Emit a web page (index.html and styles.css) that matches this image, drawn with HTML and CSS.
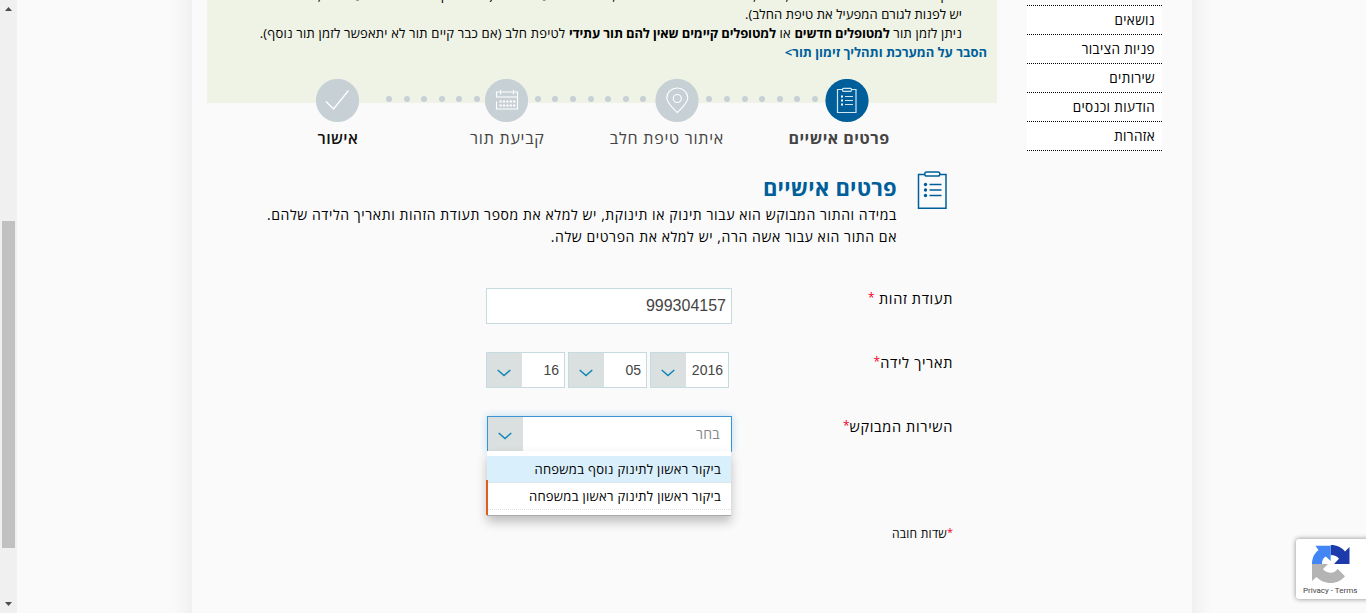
FILE: index.html
```html
<!DOCTYPE html>
<html lang="he">
<head>
<meta charset="utf-8">
<title>זימון תור לטיפת חלב</title>
<link rel="stylesheet" href="styles.css">
</head>
<body>
<div class="scrollbar">
  <svg class="arrow" width="7" height="4" viewBox="0 0 7 4"><path d="M3.5 0 7 4H0z" fill="#4d4d4d"/></svg>
  <div class="thumb"></div>
  <svg class="arrow" width="7" height="4" viewBox="0 0 7 4"><path d="M3.5 4 7 0H0z" fill="#4d4d4d"/></svg>
</div>
<div class="shade shade-left"></div>
<div class="container">
  <main class="main">
    <section class="notice" dir="rtl">
      <p class="line"><span class="t n1">זימון התור באתר הוא לטיפות חלב, ולאם, אשר תחת משרד הבריאות, בכל שאר הערים שלנו (למשל בקופת חולים או בעירייה זו,</span></p>
      <p class="line"><span class="t n1">יש לפנות לגורם המפעיל את טיפת החלב).</span></p>
      <p class="line"><span class="t n2">ניתן לזמן תור <b>למטופלים חדשים</b> או <b>למטופלים קיימים שאין להם תור עתידי</b> לטיפת חלב (אם כבר קיים תור לא יתאפשר לזמן תור נוסף).</span></p>
      <p class="line more"><a class="t n3">הסבר על המערכת ותהליך זימון תור&gt;</a></p>
    </section>
    <nav class="steps" dir="rtl">
      <div class="step active">
        <svg width="44" height="44" viewBox="0 0 44 44"><circle cx="22" cy="21.5" r="21.6" fill="#005f9b"/><g fill="none" stroke="#cfe6f1" stroke-width="1.2"><path d="M17 10.500h-4.500v23h18.500v-23h-4.500"/><rect x="17.500" y="9.300" width="9" height="3" rx="1"/><path d="M20 17.500h8M20 21.500h8M20 25.500h8"/></g><path d="M16 16.500h2v2h-2zM16 20.500h2v2h-2zM16 24.500h2v2h-2z" fill="#fff"/></svg>
        <span class="t s1">פרטים אישיים</span>
      </div>
      <div class="dots"><i></i><i></i><i></i><i></i><i></i><i></i><i></i></div>
      <div class="step">
        <svg width="44" height="44" viewBox="0 0 44 44"><circle cx="22" cy="21.5" r="21.6" fill="#c6d0d5"/><g fill="none" stroke="#fff" stroke-width="1.100"><path d="M22.300 33.500c-5-5-10.500-9.500-10.500-14.500a10.500 10 0 0 1 21 0c0 5-5.500 9.500-10.500 14.500z"/><circle cx="22.300" cy="19.500" r="4"/></g></svg>
        <span class="t s2">איתור טיפת חלב</span>
      </div>
      <div class="dots second"><i></i><i></i><i></i><i></i><i></i><i></i><i></i></div>
      <div class="step">
        <svg width="44" height="44" viewBox="0 0 44 44"><circle cx="22.5" cy="21.5" r="21.6" fill="#c6d0d5"/><g fill="none" stroke="#fff" stroke-width="1.100"><path d="M12.500 18.500v-5.500h21v17h-21v-7.500M12.500 18h21M16.500 11v4.500M29.500 11v4.500"/></g><path d="M15.500 22.500h16M15.500 26.500h16" stroke="#fff" stroke-width="2.200" stroke-dasharray="2.200 1.200"/></svg>
        <span class="t s3">קביעת תור</span>
      </div>
      <div class="dots third"><i></i><i></i><i></i><i></i><i></i><i></i></div>
      <div class="step last">
        <svg width="44" height="44" viewBox="0 0 44 44"><circle cx="21.5" cy="21.5" r="21.6" fill="#c6d0d5"/><path d="M10 22.500l7.500 7.500L32.500 11.500" fill="none" stroke="#fff" stroke-width="1.300"/></svg>
        <span class="t s4">אישור</span>
      </div>
    </nav>
    <header class="heading" dir="rtl">
      <svg width="32" height="40" viewBox="0 0 32 40"><g fill="none" stroke="#005f9b" stroke-width="1.500"><path d="M8 4.500H1.500v33.700h27.500V4.500h-6"/><rect x="7.800" y="2" width="15" height="4" rx="1.800"/><path d="M12.500 14.500h12M12.500 20h12M12.500 25.500h12" stroke-width="1.300"/></g><g fill="#005f9b"><circle cx="8.500" cy="14.500" r="1.700"/><circle cx="8.500" cy="20" r="1.700"/><circle cx="8.500" cy="25.500" r="1.700"/></g></svg>
      <div class="heading-text">
        <h1><span class="t h">פרטים אישיים</span></h1>
        <p><span class="t p1">במידה והתור המבוקש הוא עבור תינוק או תינוקת, יש למלא את מספר תעודת הזהות ותאריך הלידה שלהם.</span></p>
        <p><span class="t p2">אם התור הוא עבור אשה הרה, יש למלא את הפרטים שלה.</span></p>
      </div>
    </header>
    <form class="form" dir="rtl">
      <div class="row">
        <label><span class="t l1">תעודת זהות <em>*</em></span></label>
        <div class="input">999304157</div>
      </div>
      <div class="row">
        <label><span class="t l2">תאריך לידה<em>*</em></span></label>
        <div class="dates">
          <div class="select"><span class="val">2016</span><span class="btn"><svg width="14" height="8" viewBox="0 0 14 8"><path d="M.7 1 7 6.500 13.300 1"/></svg></span></div>
          <div class="select"><span class="val">05</span><span class="btn"><svg width="14" height="8" viewBox="0 0 14 8"><path d="M.7 1 7 6.500 13.300 1"/></svg></span></div>
          <div class="select"><span class="val">16</span><span class="btn"><svg width="14" height="8" viewBox="0 0 14 8"><path d="M.7 1 7 6.500 13.300 1"/></svg></span></div>
        </div>
      </div>
      <div class="row">
        <label><span class="t l3">השירות המבוקש<em>*</em></span></label>
        <div class="combo">
          <div class="select open"><span class="val"><span class="t c0">בחר</span></span><span class="btn"><svg width="14" height="8" viewBox="0 0 14 8"><path d="M.7 1 7 6.500 13.300 1"/></svg></span></div>
          <div class="menu">
            <div class="option hover"><span class="t o1">ביקור ראשון לתינוק נוסף במשפחה</span></div>
            <div class="option"><span class="t o2">ביקור ראשון לתינוק ראשון במשפחה</span></div>
          </div>
        </div>
      </div>
      <p class="required"><span class="t r"><em>*</em>שדות חובה</span></p>
    </form>
  </main>
  <aside class="sidebar" dir="rtl">
    <a><span class="t">נושאים</span></a>
    <a><span class="t">פניות הציבור</span></a>
    <a><span class="t">שירותים</span></a>
    <a><span class="t">הודעות וכנסים</span></a>
    <a><span class="t">אזהרות</span></a>
  </aside>
</div>
<div class="shade shade-right"></div>
<div class="captcha">
  <svg width="38" height="38" viewBox="0 0 38 38"><path d="M18.700 0C25 0 30 2.500 33 6.500L37.500 2v17H22l5-5.200C25 11.200 22.500 10 18.700 10z" fill="#1c3aa9"/><path d="M0 19C0 13 2.500 8 6.500 5.300L3.500 .8h15.200V16l-4.900-4.500C11 13 10 15.500 10 19z" fill="#4285f4"/><path d="M0 19v17l4.500-4c3.500 3.800 8.500 6 14.200 6 5.800 0 10.800-2.700 14.300-6.800l-7.500-7.400c-1.500 2.500-3.700 4-6.800 4-3.200 0-5.700-1.300-7.700-3.800l5-5z" fill="#b4b4b4"/></svg>
  <span>Privacy - Terms</span>
</div>
</body>
</html>
```
FILE: styles.css
```css
* { box-sizing: border-box; }
body { margin: 0; width: 1366px; height: 613px; overflow: hidden; background: #fafafa; display: flex; font-family: "Open Sans", "Noto Sans", sans-serif; color: #000; }
p, h1 { margin: 0; }
em { font-style: normal; color: #f00028; font-size: 12px; line-height: 1; letter-spacing: 0; vertical-align: 2px; }
.t { white-space: nowrap; }
.scrollbar { width: 17px; height: 613px; background: #f0f0f0; display: flex; flex-direction: column; align-items: flex-start; padding: 7px 0 7px 2px; }
.arrow { margin-left: 3px; flex: none; }
.thumb { width: 13px; height: 327px; background: #c1c1c1; margin: 210px 0 auto; }
.shade { width: 20px; }
.shade-left { margin-left: 155px; background: linear-gradient(to right, #fafafa, #f7f7f7 40%, #f0f0f0); }
.shade-right { background: linear-gradient(to left, #fafafa, #f7f7f7 40%, #f0f0f0); }
.container { width: 1000px; height: 613px; display: flex; padding: 0 30px 0 15px; gap: 30px; }
.main { width: 790px; }
.notice { height: 103px; background: #eff3e6; overflow: hidden; font-size: 13px; display: flex; flex-direction: column; padding-right: 35px; }
.notice .line { height: 19px; line-height: 19px; flex: none; }
.notice .line:first-child { margin-top: -14px; }
.notice .more { margin-right: -25px; color: #005f9b; font-weight: 700; }
.n1 { letter-spacing: .08px; }
.n2 { letter-spacing: .2px; }
.n2 b { letter-spacing: -.15px; }
.n3 { letter-spacing: -.03px; }
.steps { display: flex; gap: 7px; height: 72px; margin: -24px 128px 0 0; }
.step { width: 44px; flex: none; display: flex; flex-direction: column; align-items: center; color: #444; font-size: 16px; line-height: 22px; gap: 4px; }
.step svg { flex: none; }
.step.active { font-weight: 700; }
.s1 { margin-left: -16px; letter-spacing: .48px; }
.s2 { margin-left: -21px; letter-spacing: .77px; }
.s3 { margin-right: -3px; letter-spacing: .77px; }
.s4 { letter-spacing: .4px; }
.step.last { color: #111; font-weight: 600; }
.dots { display: flex; gap: 11.600px; padding-top: 17px; }
.dots i { width: 6px; height: 6px; border-radius: 50%; background: #c6d0d5; }
.dots.second { margin-right: 2px; }
.dots.third { margin: 0 -3px 0 19px; }
.heading { display: flex; gap: 20px; height: 118px; padding: 19px 48px 0 0; }
.heading-text { padding-top: 1px; }
h1 { font-size: 22px; line-height: 32px; height: 33px; color: #005f9b; }
.h { letter-spacing: .25px; }
.heading p { font-size: 14px; line-height: 22px; letter-spacing: .58px; }
.form { padding: 19px 44px 0 0; }
.row { display: flex; height: 64px; }
label { width: 221px; font-size: 14.500px; line-height: 22px; letter-spacing: .65px; }
.input { width: 246px; height: 36px; border: 1px solid #c5dbe0; background: #fff; font: 16px/34px "Liberation Sans", Arial, sans-serif; color: #444; padding-right: 5px; }
.dates { display: flex; gap: 3px; padding-right: 3px; }
.select { width: 79px; height: 36px; border: 1px solid #c5dbe0; background: #fff; display: flex; font: 14px/34px "Liberation Sans", Arial, sans-serif; color: #444; }
.val { flex: 1; padding-right: 5px; }
.btn { width: 35px; background: #dadfe0; display: flex; align-items: center; justify-content: center; padding: 6px 0 0 0; }
.btn svg { margin-right: 2px; }
.btn path { fill: none; stroke: #0a84b4; stroke-width: 1.400; }
.combo { width: 246px; }
.select.open { width: 245px; border-color: #3c93d2; border-bottom-color: #bbb; box-shadow: 0 0 8px #b9d9ee; font-family: "Open Sans", sans-serif; font-size: 14px; color: #888; }
.open .val { padding-right: 11px; letter-spacing: .3px; }
.open .btn { padding-top: 4px; }
.menu { width: 244px; height: 65px; margin: -1px 1px 0 0; padding-top: 5px; background: #fff; border-bottom: 1px solid #aaa; box-shadow: 0 6px 10px rgba(0,0,0,.24); position: relative; }
.menu::after { content: ""; position: absolute; left: -1px; top: 29px; width: 2px; height: 35px; background: #e05d21; }
.option { height: 27px; line-height: 26px; font-size: 13px; padding-right: 10px; border-bottom: 1px dotted #ddd; letter-spacing: .29px; }
.hover { background: #d9effc; }
.required { font-size: 12px; line-height: 20px; margin-top: 44px; letter-spacing: .25px; }
.required em { font-size: 11px; }
.sidebar { width: 135px; margin-top: 5px; height: 146px; background: #fff; border-top: 1px dotted #000; font-size: 13.500px; letter-spacing: .35px; }
.sidebar a { display: block; height: 29px; line-height: 29px; padding-right: 7px; border-bottom: 1px dotted #000; }
.captcha { position: absolute; left: 1296px; top: 539px; width: 75px; height: 60px; background: #fff; border-radius: 3px; box-shadow: 0 0 5px #888; display: flex; flex-direction: column; align-items: flex-start; padding: 6px 0 0 16px; gap: 2px; }
.captcha span { margin-left: -9px; font: 8px/12px Roboto, sans-serif; color: #444; white-space: nowrap; }
```
